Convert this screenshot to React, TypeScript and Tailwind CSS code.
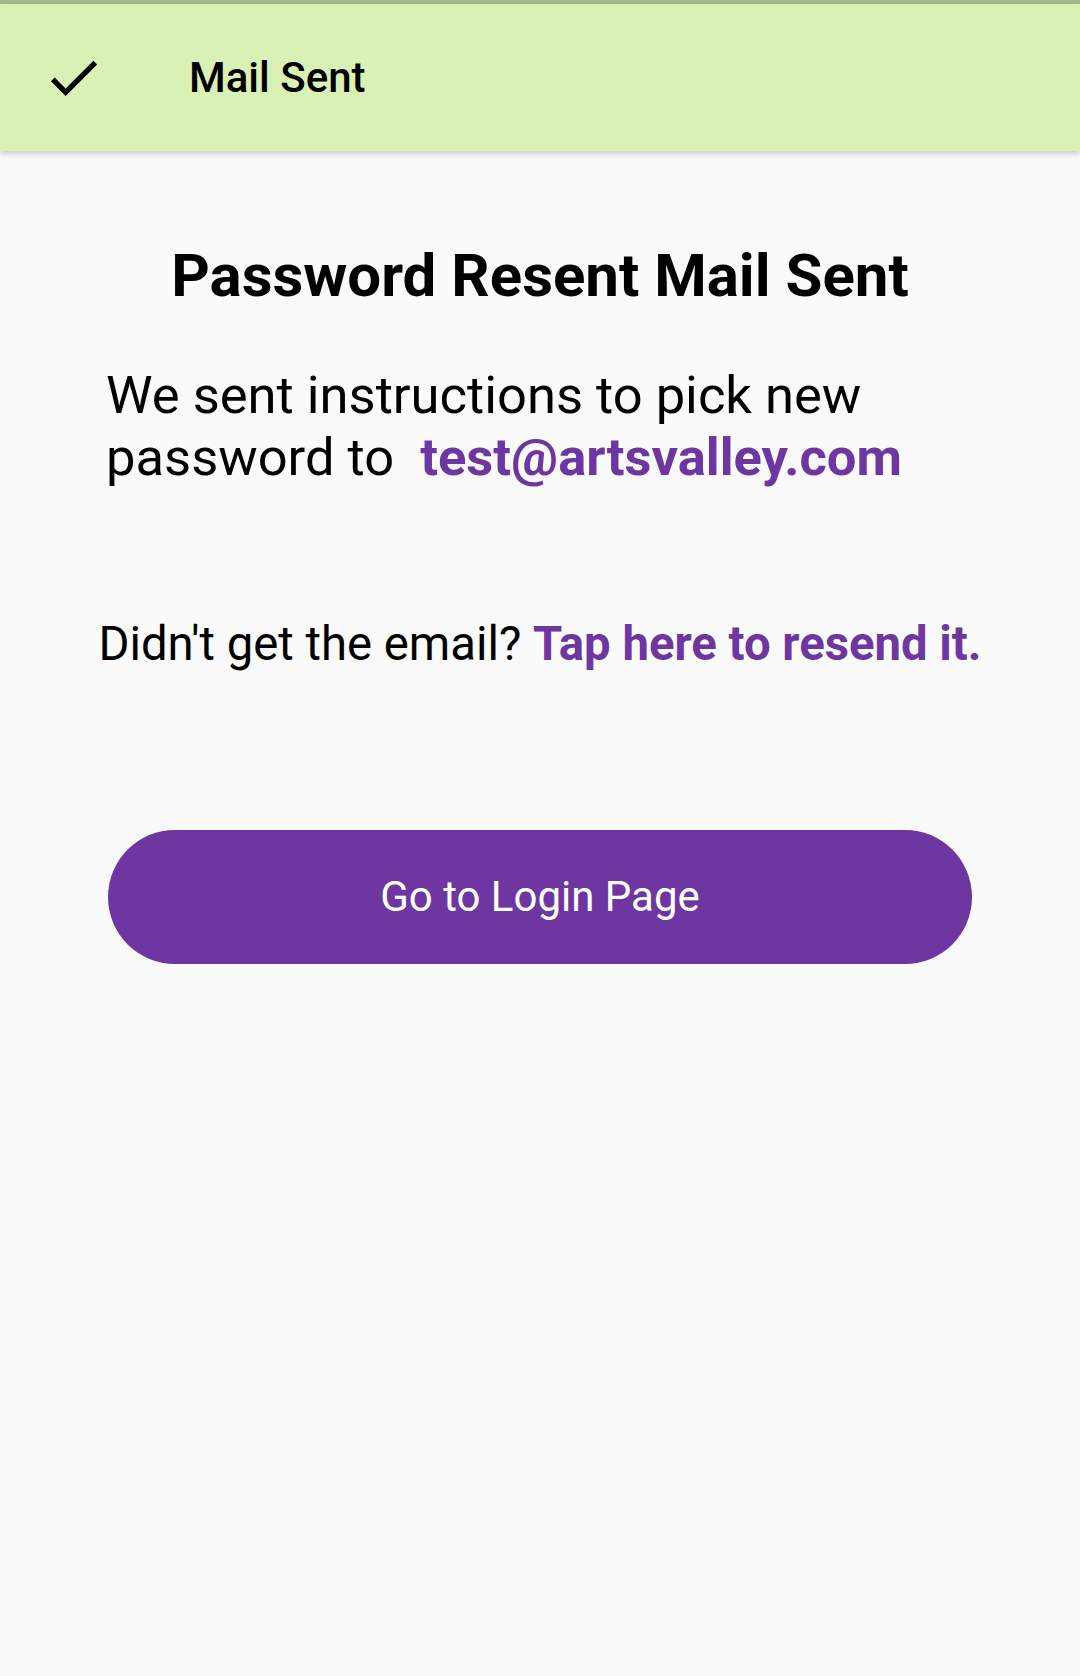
import React from "react";

export default function App() {
  return (
    <div
      className="w-[1080px] h-[1676px] bg-[#fafafa] flex flex-col"
      style={{ fontFamily: "Roboto, 'Noto Sans', sans-serif" }}
    >
      <div className="h-[4px] bg-[#a3b88a]" />
      <header className="relative z-10 h-[147px] bg-[#d9f1b4] flex items-center shadow-[0_3px_6px_rgba(0,0,0,0.18)]">
        <div className="ml-[42px] w-[63px] h-[63px] flex items-center justify-center">
          <svg width="63" height="63" viewBox="0 0 24 24" fill="#000">
            <path d="M9 16.17L4.83 12l-1.42 1.41L9 19 21 7l-1.41-1.41L9 16.17z" />
          </svg>
        </div>
        <span className="ml-[84px] text-[42px] leading-none font-medium text-black">Mail Sent</span>
      </header>

      <h1 className="mt-[90px] text-center text-[60px] leading-[1.172] font-bold text-black">
        Password Resent Mail Sent
      </h1>

      <p className="mt-[54px] px-[106px] text-[52.5px] leading-[1.172] text-black">
        We sent instructions to pick new password to{"\u00a0 "}
        <span className="font-bold text-[#6e36a1]">test@artsvalley.com</span>
      </p>

      <p className="mt-[129px] text-center text-[47.25px] leading-[1.172] text-black">
        Didn't get the email?{" "}
        <span className="font-bold text-[#6e36a1]">Tap here to resend it.</span>
      </p>

      <div className="mt-[157px] px-[108px]">
        <button className="w-full h-[134px] rounded-full bg-[#6e36a1] text-white text-[42px] leading-none flex items-center justify-center">
          Go to Login Page
        </button>
      </div>
    </div>
  );
}
